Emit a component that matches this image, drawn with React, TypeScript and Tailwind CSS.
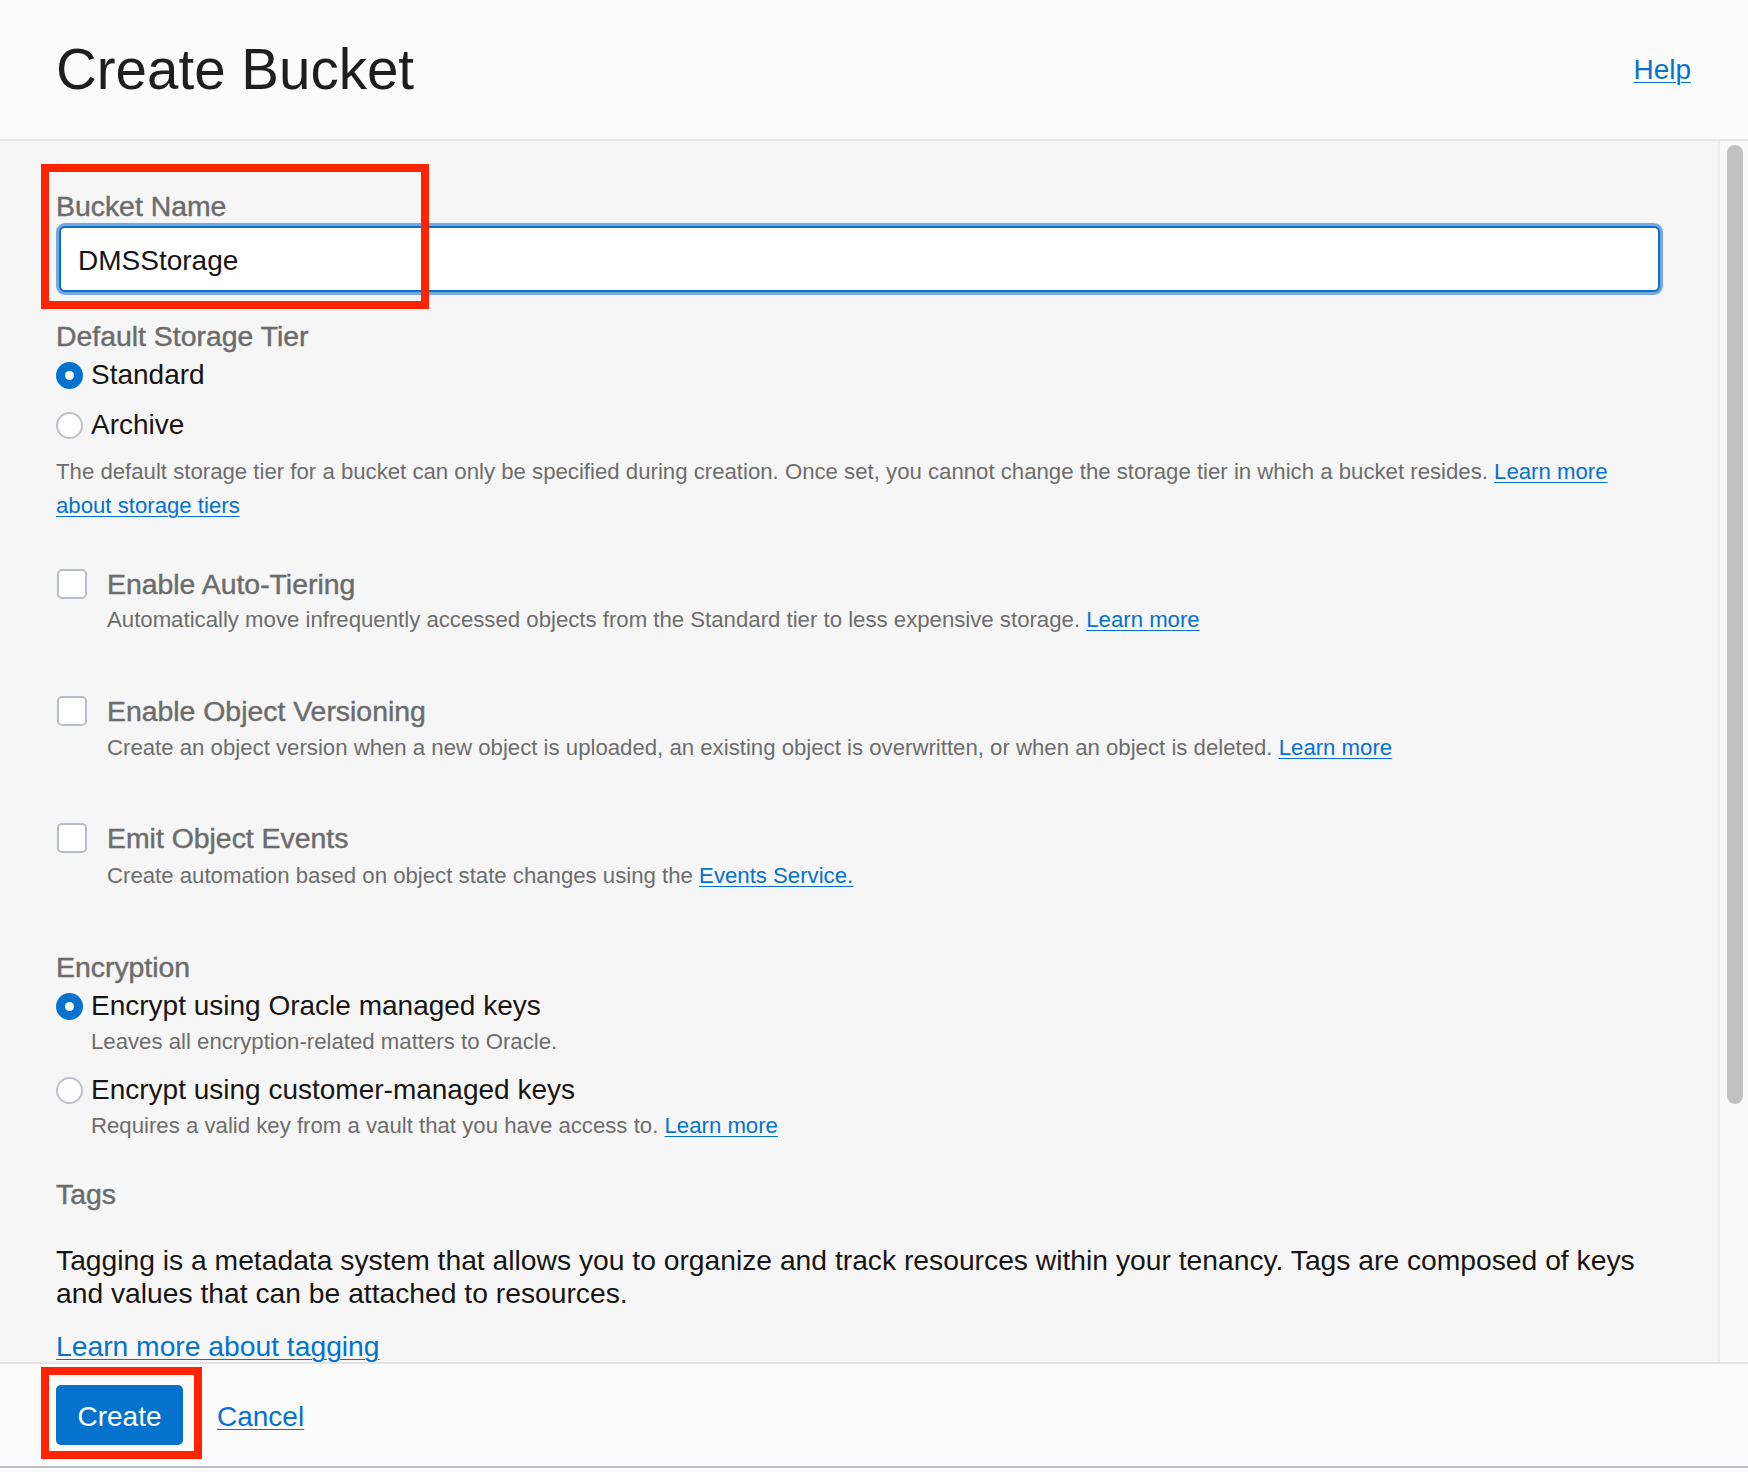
import React from 'react';

function Radio({ checked }: { checked?: boolean }) {
  return checked ? (
    <span className="w-[27px] h-[27px] rounded-full bg-[#0572ce] flex items-center justify-center shrink-0">
      <span className="w-[9px] h-[9px] rounded-full bg-white" />
    </span>
  ) : (
    <span className="w-[27px] h-[27px] rounded-full bg-white border-2 border-[#bcc1c8] shrink-0" />
  );
}

function Link({ children, className = '' }: { children: React.ReactNode; className?: string }) {
  return <a className={`text-[#0572ce] underline underline-offset-[3px] decoration-1 cursor-pointer ${className}`}>{children}</a>;
}

// section / option labels render a touch heavier than body text
const label = 'text-[28.4px] leading-[32px] text-[#6c6c6c] [-webkit-text-stroke:0.45px_#6c6c6c]';

function CheckOption({ text, mt, descMt, children }: { text: string; mt: string; descMt: string; children: React.ReactNode }) {
  return (
    <div className={mt}>
      <div className="flex items-center h-[32px]">
        <span className="ml-px w-[30px] h-[30px] rounded-[5px] border-2 border-[#b8bec7] bg-white shrink-0" />
        <span className={`ml-[20px] ${label}`}>{text}</span>
      </div>
      <p className={`${descMt} pl-[51px] text-[22.2px] leading-[34px] text-[#6d6d6d]`}>{children}</p>
    </div>
  );
}

export default function App() {
  return (
    <div className="relative w-[1748px] h-[1472px] flex flex-col bg-[#fbfbfb] font-['Liberation_Sans',Arial,sans-serif] overflow-hidden">
      {/* header */}
      <header className="h-[141px] shrink-0 flex items-center justify-between pl-[56px] pr-[57px] border-b-2 border-[#e6e6e6]">
        <h1 className="text-[56.5px] leading-none text-[#1e1e1e] mt-[2px]">Create Bucket</h1>
        <Link className="text-[28px] leading-none mt-[1px]">Help</Link>
      </header>

      {/* body */}
      <div className="flex-1 flex min-h-0">
        <div className="flex-1 overflow-hidden bg-[#f6f6f6] pl-[56px] pr-[55px] pt-[49px]">
          <label className={`block ${label}`}>Bucket Name</label>
          <div className="mt-[1px] p-[3px] rounded-[9px] bg-[#74a8e0]">
            <input
              readOnly
              defaultValue="DMSStorage"
              className="w-full h-[66px] rounded-[6px] border-2 border-[#0b6fcc] bg-white pl-[17px] pt-[3px] text-[28px] text-[#161513] outline-none font-['Liberation_Sans',Arial,sans-serif]"
            />
          </div>

          <div className={`mt-[25px] ${label}`}>Default Storage Tier</div>
          <div className="mt-[3px] h-[40px] flex items-center gap-[8px]">
            <Radio checked />
            <span className="text-[28px] text-[#161513]">Standard</span>
          </div>
          <div className="mt-[10px] h-[40px] flex items-center gap-[8px]">
            <Radio />
            <span className="text-[28px] text-[#161513]">Archive</span>
          </div>
          <p className="mt-[10px] text-[22.2px] leading-[34px] text-[#6d6d6d] pr-[40px]">
            The default storage tier for a bucket can only be specified during creation. Once set, you cannot change the storage tier in which a bucket resides. <Link>Learn more about storage tiers</Link>
          </p>

          <CheckOption text="Enable Auto-Tiering" mt="mt-[45px]" descMt="mt-[3px]">
            Automatically move infrequently accessed objects from the Standard tier to less expensive storage. <Link>Learn more</Link>
          </CheckOption>
          <CheckOption text="Enable Object Versioning" mt="mt-[58px]" descMt="mt-[4px]">
            Create an object version when a new object is uploaded, an existing object is overwritten, or when an object is deleted. <Link>Learn more</Link>
          </CheckOption>
          <CheckOption text="Emit Object Events" mt="mt-[57px]" descMt="mt-[5px]">
            Create automation based on object state changes using the <Link>Events Service.</Link>
          </CheckOption>

          <div className={`mt-[58px] ${label}`}>Encryption</div>
          <div className="mt-[5px] h-[36px] flex items-center gap-[8px]">
            <Radio checked />
            <span className="text-[28px] text-[#161513]">Encrypt using Oracle managed keys</span>
          </div>
          <p className="mt-[1px] pl-[35px] text-[22.2px] leading-[34px] text-[#6d6d6d]">Leaves all encryption-related matters to Oracle.</p>
          <div className="mt-[13px] h-[36px] flex items-center gap-[8px]">
            <Radio />
            <span className="text-[28px] text-[#161513]">Encrypt using customer-managed keys</span>
          </div>
          <p className="mt-[1px] pl-[35px] text-[22.2px] leading-[34px] text-[#6d6d6d]">
            Requires a valid key from a vault that you have access to. <Link>Learn more</Link>
          </p>

          <div className={`mt-[35px] ${label}`}>Tags</div>
          <p className="mt-[34px] text-[28.25px] leading-[33px] text-[#161513] pr-[20px]">
            Tagging is a metadata system that allows you to organize and track resources within your tenancy. Tags are composed of keys and values that can be attached to resources.
          </p>
          <div className="mt-[20px] text-[28.25px] leading-[32px]">
            <Link>Learn more about tagging</Link>
          </div>
        </div>

        {/* scrollbar */}
        <div className="w-[30px] shrink-0 border-l-2 border-[#ebebeb] bg-[#fafafa] pl-[7px] pt-[4px]">
          <div className="w-[16px] h-[959px] rounded-full bg-[#c1c1c1]" />
        </div>
      </div>

      {/* footer */}
      <footer className="h-[106px] shrink-0 flex items-center gap-[34px] pl-[56px] border-t-2 border-[#e4e4e4] border-b-2 border-b-[#b9bcc2]">
        <button className="w-[127px] h-[60px] rounded-[5px] bg-[#0572ce] text-white text-[28px] pt-[3px] font-['Liberation_Sans',Arial,sans-serif]">Create</button>
        <Link className="text-[28px] mt-[3px]">Cancel</Link>
      </footer>
      <div className="h-[4px] shrink-0" />

      {/* highlight boxes */}
      <div className="absolute left-[41px] top-[164px] w-[388px] h-[145px] border-[8px] border-[#ff2400] pointer-events-none" />
      <div className="absolute left-[41px] top-[1367px] w-[161px] h-[92px] border-[8px] border-[#ff2400] pointer-events-none" />
    </div>
  );
}
